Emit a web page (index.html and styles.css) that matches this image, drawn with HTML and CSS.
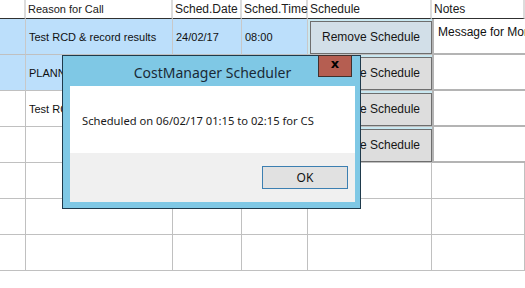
FILE: index.html
```html
<!DOCTYPE html>
<html>
<head>
<meta charset="utf-8">
<link rel="stylesheet" href="styles.css">
</head>
<body>
<div class="grid">
  <div class="hd"></div>
  <div class="hd small">Reason for Call</div>
  <div class="hd">Sched.Date</div>
  <div class="hd">Sched.Time</div>
  <div class="hd">Schedule</div>
  <div class="hd">Notes</div>

  <div class="c sel"></div>
  <div class="c sel">Test RCD &amp; record results</div>
  <div class="c sel">24/02/17</div>
  <div class="c sel">08:00</div>
  <div class="c btncell"><button class="btn hot">Remove Schedule</button></div>
  <div class="c notes">Message for Monday</div>

  <div class="c sel"></div>
  <div class="c sel">PLANNED MAINTENANCE</div>
  <div class="c sel"></div>
  <div class="c sel"></div>
  <div class="c btncell"><button class="btn">Remove Schedule</button></div>
  <div class="c notes"></div>

  <div class="c"></div>
  <div class="c">Test RCD</div>
  <div class="c"></div>
  <div class="c"></div>
  <div class="c btncell"><button class="btn">Remove Schedule</button></div>
  <div class="c notes"></div>

  <div class="c"></div>
  <div class="c"></div>
  <div class="c"></div>
  <div class="c"></div>
  <div class="c btncell"><button class="btn">Remove Schedule</button></div>
  <div class="c notes"></div>

  <div class="c"></div><div class="c"></div><div class="c"></div><div class="c"></div><div class="c"></div><div class="c"></div>
  <div class="c"></div><div class="c"></div><div class="c"></div><div class="c"></div><div class="c"></div><div class="c"></div>
  <div class="c"></div><div class="c"></div><div class="c"></div><div class="c"></div><div class="c"></div><div class="c"></div>
</div>

<div class="dialog">
  <div class="titlebar">
    <span class="title">CostManager Scheduler</span>
    <button class="close">x</button>
  </div>
  <div class="client">
    <div class="msg">Scheduled on 06/02/17 01:15 to 02:15 for CS</div>
    <div class="footer"><button class="ok">OK</button></div>
  </div>
</div>
</body>
</html>
```

FILE: styles.css
```css
html, body {
  margin: 0;
  padding: 0;
  background: #ffffff;
  overflow: hidden;
}
body {
  width: 525px;
  height: 288px;
  position: relative;
  font-family: "Liberation Sans", Arial, sans-serif;
}
.grid {
  display: grid;
  grid-template-columns: 26px 147px 69px 66px 124px 93px;
  grid-template-rows: 19px repeat(7, 36px);
  height: 288px;
  overflow: hidden;
}
.hd {
  box-sizing: border-box;
  border-right: 2px solid #dcdcdc;
  border-bottom: 1px solid #303030;
  font-size: 12px;
  color: #202020;
  padding: 1px 0 0 2px;
  line-height: 16px;
  white-space: nowrap;
  overflow: visible;
  background: #ffffff;
}
.hd.small {
  font-size: 11px;
}
.c {
  box-sizing: border-box;
  border-right: 1px solid #c0c0c0;
  border-bottom: 1px solid #c0c0c0;
  font-size: 11px;
  color: #101010;
  padding-left: 3px;
  display: flex;
  align-items: center;
  white-space: nowrap;
  overflow: hidden;
  background: #ffffff;
}
.sel {
  background: #bcdffb;
  border-right-color: #c8c8c8;
}
.btncell {
  background: #c9e8f1;
  padding: 2px 0 1px 2px;
  overflow: visible;
  border-right: none;
}
.btn {
  box-sizing: border-box;
  width: 123px;
  height: 33px;
  margin: 0;
  border: 1px solid #6e6e6e;
  background: #dddddd;
  font-family: "Liberation Sans", Arial, sans-serif;
  font-size: 12px;
  color: #151515;
  padding: 0;
}
.btn.hot {
  background: #d2dfe8;
}
.notes {
  align-items: flex-start;
  padding: 6px 0 0 4px;
  border-left: 2px solid #b4b4b4;
  border-bottom: 2px solid #b4b4b4;
  border-right: none;
  font-size: 12px;
}
.dialog {
  position: absolute;
  left: 62px;
  top: 55px;
  width: 299px;
  height: 154px;
  box-sizing: border-box;
  border: 1px solid #1f3a4c;
  background: #7fc8e5;
  display: flex;
  flex-direction: column;
  padding: 0 5px 6px 7px;
}
.titlebar {
  height: 30px;
  position: relative;
  display: flex;
  align-items: center;
  justify-content: center;
  flex: none;
}
.title {
  font-family: "Noto Sans", "Open Sans", sans-serif;
  font-size: 14px;
  color: #1a2a36;
  margin-top: 2px;
  padding-left: 0;
}
.close {
  position: absolute;
  right: 3px;
  top: -1px;
  width: 34px;
  height: 22px;
  box-sizing: border-box;
  border: 1px solid #40302d;
  background: #b55e51;
  color: #000;
  font-family: "DejaVu Sans", sans-serif;
  font-weight: bold;
  font-size: 13px;
  line-height: 16px;
  padding: 0 0 4px 0;
}
.client {
  flex: 1;
  display: flex;
  flex-direction: column;
  background: #ffffff;
}
.msg {
  height: 67px;
  flex: none;
  box-sizing: border-box;
  padding: 27px 0 0 12px;
  font-family: "Noto Sans", "Open Sans", sans-serif;
  font-size: 11.2px;
  color: #1a1a1a;
  white-space: nowrap;
}
.footer {
  flex: 1;
  background: #f0f0f0;
  display: flex;
  justify-content: flex-end;
  align-items: flex-start;
  padding: 13px 7px 0 0;
}
.ok {
  box-sizing: border-box;
  width: 86px;
  height: 23px;
  border: 1px solid #3c7fb1;
  background: #e1e1e1;
  font-family: "Noto Sans", "Open Sans", sans-serif;
  font-size: 12px;
  color: #111;
  padding: 0;
}
```
